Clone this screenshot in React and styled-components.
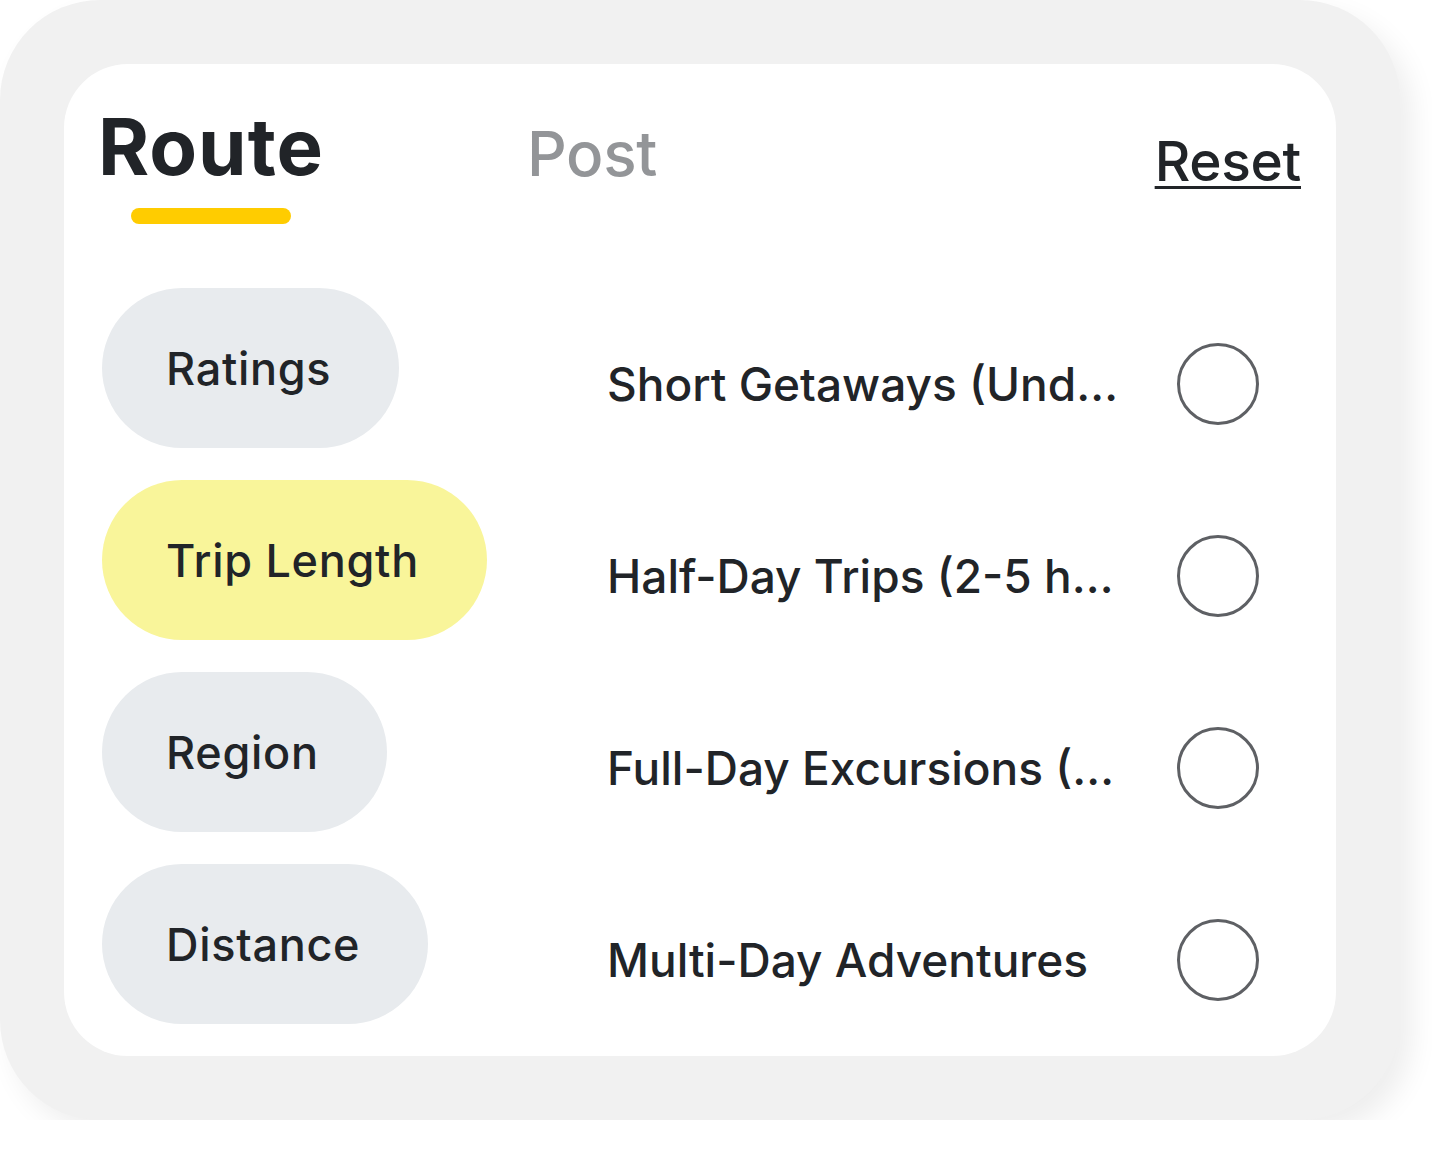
import React, { useState } from "react";
import styled, { createGlobalStyle } from "styled-components";

const GlobalStyle = createGlobalStyle`
  html, body {
    margin: 0;
    padding: 0;
    background: #ffffff;
  }
  body {
    font-family: Inter, "Noto Sans", sans-serif;
    color: #212428;
  }
`;

const Frame = styled.div`
  width: 1400px;
  height: 1120px;
  box-sizing: border-box;
  padding: 64px;
  background: #f1f1f1;
  border-radius: 100px;
  box-shadow: 12px 14px 28px rgba(0, 0, 0, 0.07);
`;

const Card = styled.div`
  height: 100%;
  box-sizing: border-box;
  background: #ffffff;
  border-radius: 64px;
  padding: 44px 35px 0 34px;
  display: flex;
  flex-direction: column;
`;

const Header = styled.div`
  display: flex;
  align-items: flex-start;
  height: 180px;
`;

const Tab = styled.button`
  background: none;
  border: none;
  padding: 0;
  cursor: pointer;
  display: flex;
  flex-direction: column;
  align-items: center;
  font-family: inherit;
  color: ${(p) => (p.$active ? "#212428" : "#939598")};
  font-size: ${(p) => (p.$active ? "78px" : "62px")};
  font-weight: ${(p) => (p.$active ? 700 : 500)};
  line-height: 1;
  letter-spacing: ${(p) => (p.$active ? "1px" : "-0.3px")};
  margin-top: ${(p) => (p.$active ? "0" : "15px")};
  margin-right: ${(p) => (p.$active ? "203px" : "0")};
`;

const TabLine = styled.span`
  display: block;
  width: 160px;
  height: 16px;
  border-radius: 8px;
  background: #ffcc00;
  margin-top: 22px;
`;

const Reset = styled.button`
  margin-left: auto;
  margin-top: 26px;
  background: none;
  border: none;
  padding: 0;
  cursor: pointer;
  font-family: inherit;
  font-size: 55px;
  font-weight: 500;
  line-height: 1;
  letter-spacing: -0.3px;
  color: #212428;
  text-decoration: underline;
  text-decoration-thickness: 3px;
  text-underline-offset: 5px;
`;

const Body = styled.div`
  display: flex;
  padding-left: 4px;
`;

const Categories = styled.div`
  display: flex;
  flex-direction: column;
  align-items: flex-start;
  gap: 32px;
  width: 505px;
`;

const Pill = styled.button`
  height: 160px;
  border-radius: 80px;
  border: none;
  padding: 0 68px 0 64px;
  cursor: pointer;
  font-family: inherit;
  font-size: 45px;
  font-weight: 500;
  letter-spacing: 0.7px;
  color: #212428;
  background: ${(p) => (p.$active ? "#f9f59a" : "#e8ebee")};
`;

const Options = styled.div`
  display: flex;
  flex-direction: column;
  gap: 32px;
  padding-top: 16px;
`;

const Option = styled.label`
  display: flex;
  align-items: center;
  height: 160px;
  gap: 56px;
  cursor: pointer;
`;

const OptionText = styled.span`
  width: 514px;
  font-size: 46px;
  font-weight: 500;
  letter-spacing: 0;
  white-space: nowrap;
  overflow: hidden;
  text-overflow: ellipsis;
  color: #212428;
`;

const Radio = styled.span`
  width: 82px;
  height: 82px;
  box-sizing: border-box;
  border-radius: 50%;
  border: 3px solid #5e6064;
  flex-shrink: 0;
  display: flex;
  align-items: center;
  justify-content: center;

  &::after {
    content: "";
    width: 46px;
    height: 46px;
    border-radius: 50%;
    background: ${(p) => (p.$checked ? "#ffcc00" : "transparent")};
  }
`;

const categories = ["Ratings", "Trip Length", "Region", "Distance"];

const options = [
  "Short Getaways (Under 2 hours)",
  "Half-Day Trips (2-5 hours)",
  "Full-Day Excursions (5+ hours)",
  "Multi-Day Adventures",
];

export default function App() {
  const [tab, setTab] = useState("route");
  const [category, setCategory] = useState(1);
  const [picked, setPicked] = useState(null);

  return (
    <>
      <GlobalStyle />
      <Frame>
        <Card>
          <Header>
            <Tab $active={tab === "route"} onClick={() => setTab("route")}>
              Route
              {tab === "route" && <TabLine />}
            </Tab>
            <Tab $active={tab === "post"} onClick={() => setTab("post")}>
              Post
            </Tab>
            <Reset onClick={() => setPicked(null)}>Reset</Reset>
          </Header>
          <Body>
            <Categories>
              {categories.map((c, i) => (
                <Pill
                  key={c}
                  $active={category === i}
                  onClick={() => setCategory(i)}
                >
                  {c}
                </Pill>
              ))}
            </Categories>
            <Options>
              {options.map((o, i) => (
                <Option key={o} onClick={() => setPicked(i)}>
                  <OptionText>{o}</OptionText>
                  <Radio $checked={picked === i} />
                </Option>
              ))}
            </Options>
          </Body>
        </Card>
      </Frame>
    </>
  );
}
